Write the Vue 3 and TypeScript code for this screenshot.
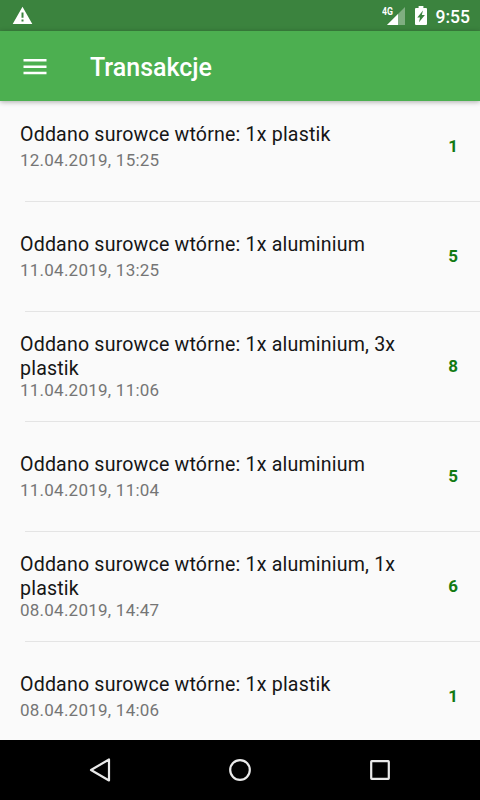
<script setup lang="ts">
interface Transaction {
  title: string
  date: string
  points: number
  tall?: boolean
}

const transactions: Transaction[] = [
  { title: 'Oddano surowce wtórne: 1x plastik', date: '12.04.2019, 15:25', points: 1 },
  { title: 'Oddano surowce wtórne: 1x aluminium', date: '11.04.2019, 13:25', points: 5 },
  { title: 'Oddano surowce wtórne: 1x aluminium, 3x plastik', date: '11.04.2019, 11:06', points: 8, tall: true },
  { title: 'Oddano surowce wtórne: 1x aluminium', date: '11.04.2019, 11:04', points: 5 },
  { title: 'Oddano surowce wtórne: 1x aluminium, 1x plastik', date: '08.04.2019, 14:47', points: 6, tall: true },
  { title: 'Oddano surowce wtórne: 1x plastik', date: '08.04.2019, 14:06', points: 1 },
]
</script>

<template>
  <div class="screen">
    <div class="status">
      <svg class="warning" width="20" height="18" viewBox="0 0 20 18">
        <path fill="#fff" fill-rule="evenodd" d="M9.5 -.2 L19.3 17 H-.3Z M8.5 5.6 V10.8 H10.5 V5.6Z M8.5 12.4 V14.6 H10.5 V12.4Z" />
      </svg>
      <div class="indicators">
        <div class="signal">
          <span class="network">4G</span>
          <svg width="18" height="18" viewBox="0 0 18 18">
            <path fill="#fff" fill-opacity=".35" d="M0 18 L18 0 V18Z" />
            <path fill="#fff" d="M0 18 L11 7 V18Z" />
          </svg>
        </div>
        <svg class="battery" width="12" height="19" viewBox="0 0 12 19">
          <path fill="#fff" fill-rule="evenodd" d="M3.6 0 H8.4 V2 H11 Q12 2 12 3 V18 Q12 19 11 19 H1 Q0 19 0 18 V3 Q0 2 1 2 H3.6Z M8 4.6 L2.3 11.6 H5 L4 16.2 L9.9 9 H6.8Z" />
        </svg>
        <span class="clock">9:55</span>
      </div>
    </div>
    <header class="appbar">
      <svg class="menu" width="24" height="16" viewBox="0 0 24 16">
        <path fill="#fff" d="M.5 0H23.5V2.5H.5Z M.5 6.4H23.5V8.9H.5Z M.5 12.7H23.5V15.2H.5Z" />
      </svg>
      <h1>Transakcje</h1>
    </header>
    <main class="list">
      <div v-for="(item, i) in transactions" :key="i" class="entry">
        <div class="tile" :class="{ tall: item.tall }">
          <div class="text">
            <div class="title">{{ item.title }}</div>
            <div class="date">{{ item.date }}</div>
          </div>
          <div class="points">{{ item.points }}</div>
        </div>
        <div class="divider"></div>
      </div>
    </main>
    <nav class="navbar">
      <svg width="320" height="60" viewBox="0 0 320 60" fill="none" stroke="#e9e9e9" stroke-width="2.2">
        <path stroke-linejoin="round" d="M29 19.5 V40.5 L11 30Z" />
        <circle cx="160" cy="30" r="9.8" />
        <rect x="291.2" y="21.2" width="17.6" height="17.6" rx=".5" />
      </svg>
    </nav>
  </div>
</template>

<style>
body {
  margin: 0;
}
</style>

<style scoped>
.screen {
  width: 480px;
  height: 800px;
  display: flex;
  flex-direction: column;
  overflow: hidden;
  background: #fafafa;
  font-family: Roboto, sans-serif;
}
.status {
  flex: none;
  height: 31px;
  box-sizing: border-box;
  padding: 7px 10px 0 13px;
  display: flex;
  justify-content: space-between;
  align-items: flex-start;
  background: #3b833e;
  color: #fff;
}
.warning {
  overflow: visible;
}
.indicators {
  display: flex;
  align-items: flex-start;
}
.signal {
  position: relative;
  width: 18px;
  height: 18px;
  margin-right: 10px;
}
.signal svg {
  display: block;
}
.network {
  position: absolute;
  left: -5px;
  top: 0;
  font-size: 10px;
  line-height: 10px;
  font-weight: 700;
  transform: scaleX(0.87);
  transform-origin: left;
}
.battery {
  margin: -1px 9px 0 0;
}
.clock {
  font-size: 17.5px;
  line-height: 20px;
  font-weight: 500;
}
.appbar {
  position: relative;
  flex: none;
  height: 70px;
  box-sizing: border-box;
  padding: 0 23px;
  display: flex;
  align-items: center;
  background: #4caf50;
  box-shadow: 0 1px 5px rgba(0, 0, 0, 0.32);
}
.menu {
  margin-top: 1px;
}
h1 {
  margin: 4px 0 0 43px;
  color: #fff;
  font-size: 25px;
  line-height: 30px;
  font-weight: 500;
}
.list {
  flex: 1;
  min-height: 0;
  overflow: hidden;
}
.tile {
  height: 90px;
  box-sizing: border-box;
  padding: 22px 22px 0 20px;
  display: flex;
  justify-content: space-between;
}
.tall {
  padding-top: 12px;
}
.text {
  width: 400px;
}
.title {
  color: #161616;
  font-size: 19.6px;
  line-height: 24px;
  letter-spacing: 0.18px;
}
.date {
  margin-top: 3px;
  color: #757575;
  font-size: 17px;
  line-height: 20px;
  letter-spacing: 0.24px;
}
.tall .date {
  margin-top: -1px;
}
.points {
  margin-top: 13px;
  color: #127a12;
  font-size: 17px;
  line-height: 20px;
  font-weight: 700;
}
.tall .points {
  margin-top: 23px;
}
.divider {
  height: 20px;
  display: flex;
  align-items: center;
}
.divider::after {
  content: '';
  flex: 1;
  height: 1px;
  margin-left: 25px;
  background: #e4e4e4;
}
.navbar {
  flex: none;
  height: 60px;
  display: flex;
  justify-content: center;
  background: #000;
}
</style>
